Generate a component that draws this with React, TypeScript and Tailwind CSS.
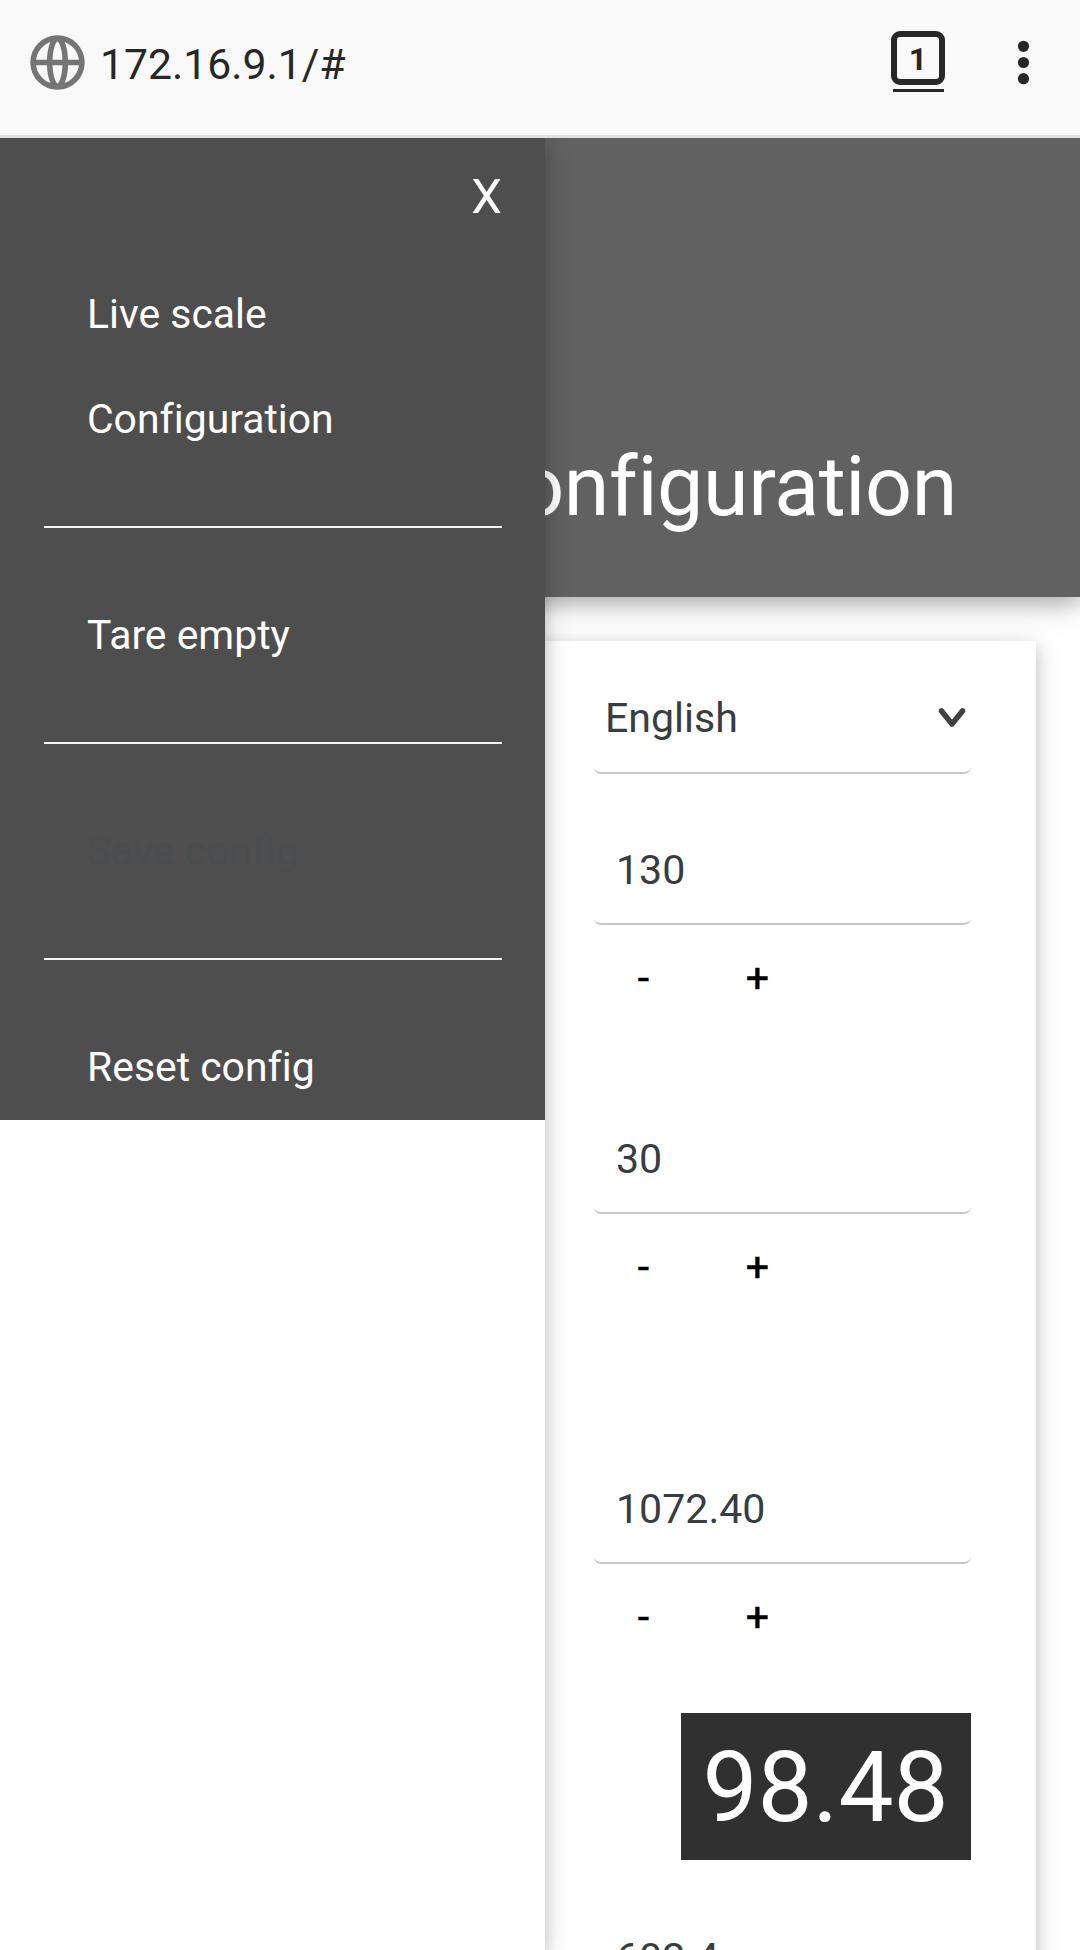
import type { ReactNode } from "react";

const SHADOW =
  "shadow-[0_5.5px_14px_0_rgba(0,0,0,0.16),0_5.5px_28px_0_rgba(0,0,0,0.14)]";

function AddressBar() {
  return (
    <div className="flex h-[138px] items-start border-b-[3px] border-[#e1e1e1] bg-[#f9f9f9] text-[#272727]">
      <svg className="ml-[30px] mt-[35px] size-[55px]" viewBox="0 0 55 55" fill="none" stroke="#757575" strokeWidth="5.6">
        <circle cx="27.5" cy="27.5" r="24.4" />
        <ellipse cx="27.5" cy="27.5" rx="7.8" ry="24" />
        <path d="M3 27.5h49" />
      </svg>
      <span className="ml-[15px] mt-[36px] text-[42.7px] leading-[56px]">172.16.9.1/#</span>
      <div className="ml-auto mt-[31px] flex flex-col items-center gap-1">
        <div className="flex size-[54px] items-center justify-center rounded-[9px] border-[6px] border-[#272727] pt-px text-[32px] font-bold leading-none">
          1
        </div>
        <div className="h-[3px] w-[51px] bg-[#272727]" />
      </div>
      <svg className="ml-[72px] mr-[50px] mt-[38px] h-[50px] w-[13px]" viewBox="0 0 13 50" fill="#272727">
        <circle cx="6.5" cy="8.3" r="5.6" />
        <circle cx="6.5" cy="24.5" r="5.6" />
        <circle cx="6.5" cy="40.7" r="5.6" />
      </svg>
    </div>
  );
}

function MenuItem({ children, disabled }: { children: ReactNode; disabled?: boolean }) {
  return (
    <li className={`flex h-[105px] items-center pl-[87px] ${disabled ? "text-[#494d4f]" : "text-white"}`}>
      {children}
    </li>
  );
}

function Divider() {
  return <li className="ml-[44px] mr-[43px] my-[54.5px] h-[2px] bg-[#f4f4f4]" />;
}

function SideMenu() {
  return (
    <nav className={`absolute left-0 top-0 h-[1812px] w-[545px] bg-white ${SHADOW}`}>
      <div className="h-[982px] overflow-hidden bg-[#4e4e4e]">
        <div className="flex h-[123px] justify-end pr-[43px] pt-[29px] text-[49px] leading-[60px] text-white">X</div>
        <ul className="text-[40.9px]">
          <MenuItem>Live scale</MenuItem>
          <MenuItem>Configuration</MenuItem>
          <Divider />
          <MenuItem>Tare empty</MenuItem>
          <Divider />
          <MenuItem disabled>Save config</MenuItem>
          <Divider />
          <MenuItem>Reset config</MenuItem>
        </ul>
      </div>
    </nav>
  );
}

function ValueInput({ value }: { value: string }) {
  return (
    <div className="flex h-[105px] items-center rounded-[7px] border-b-2 border-[#c8c8c8] pb-[4px] pl-[22px] text-[#373d41]">
      {value}
    </div>
  );
}

function NumberField({ value }: { value: string }) {
  return (
    <div>
      <ValueInput value={value} />
      <div className="flex h-[106px] items-center pb-px text-black [-webkit-text-stroke:0.5px_black]">
        <span className="w-[99px] text-center">-</span>
        <span className="ml-[15px] w-[99px] text-center">+</span>
      </div>
    </div>
  );
}

export default function App() {
  return (
    <div className="h-[1950px] w-[1080px] overflow-hidden bg-white font-[Roboto,sans-serif] text-[41.1px] leading-[56px] [font-variant-ligatures:none]">
      <AddressBar />
      <div className="relative h-[1812px] overflow-hidden">
        <header className="flex h-[459px] items-end justify-end bg-[#616161] pb-[55px] pr-[123px] text-[82.5px] leading-[110px] tracking-[-0.35px] text-white shadow-[0_8px_18px_0_rgba(0,0,0,0.2),0_8px_32px_0_rgba(0,0,0,0.15)]">
          Configuration
        </header>
        <main className={`mx-[44px] mt-[44px] h-[1500px] bg-white pl-[550px] pr-[65px] pt-[28px] ${SHADOW}`}>
          <div className="flex h-[105px] items-center justify-between rounded-[7px] border-b-2 border-[#c8c8c8] pb-[5px] pl-[11px] pr-[5px] text-[#373d41]">
            English
            <svg className="size-[28px]" viewBox="0 0 28 28" fill="none" stroke="#414141" strokeWidth="5.5" strokeLinecap="round" strokeLinejoin="round">
              <path d="M3.5 7l10.5 13L24.5 7" />
            </svg>
          </div>
          <div className="mt-[46px]">
            <NumberField value="130" />
          </div>
          <div className="mt-[78px]">
            <NumberField value="30" />
          </div>
          <div className="mt-[139px]">
            <NumberField value="1072.40" />
          </div>
          <div className="ml-auto mt-[43px] flex h-[147px] w-[290px] items-center justify-center bg-[#303030] pr-px pt-[2px] text-[98px] leading-none text-white">
            98.48
          </div>
          <div className="mt-[48px]">
            <ValueInput value="602.4" />
          </div>
        </main>
        <SideMenu />
      </div>
    </div>
  );
}
